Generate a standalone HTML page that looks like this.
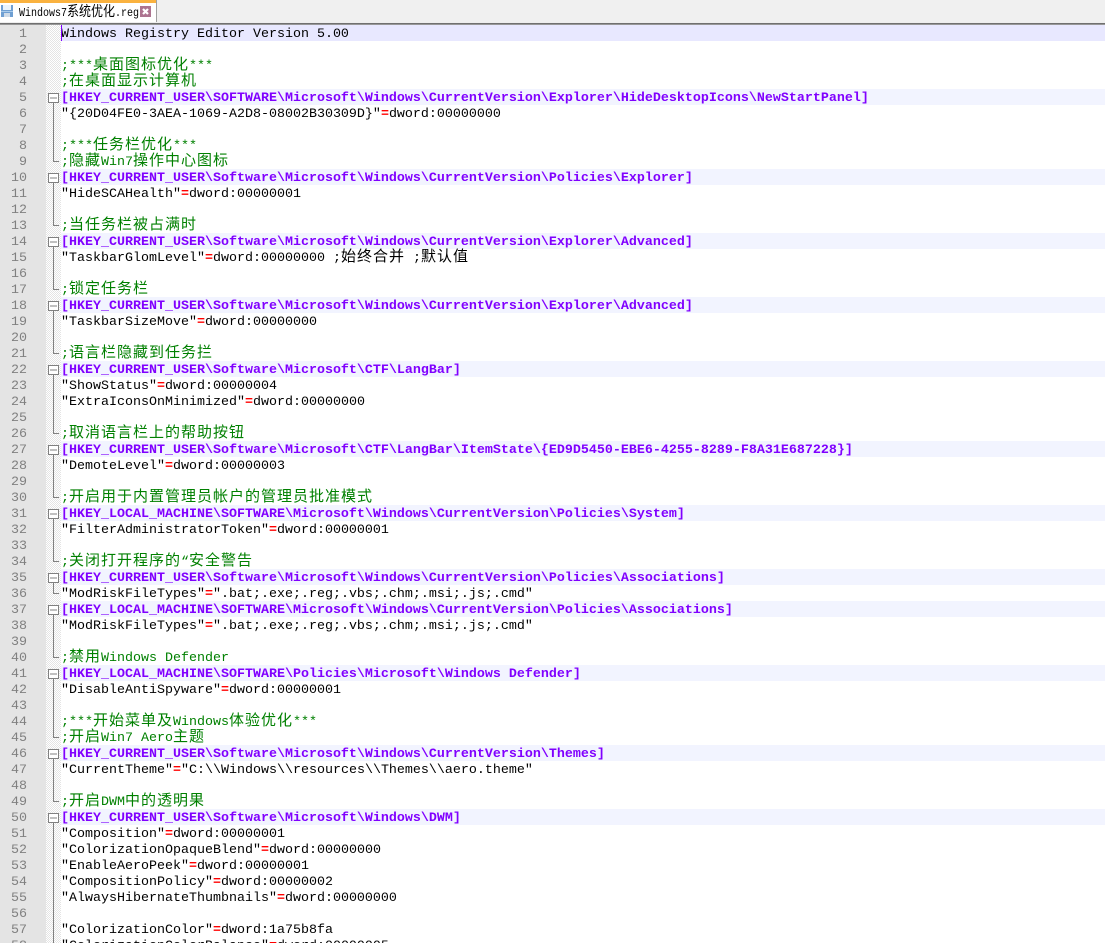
<!DOCTYPE html>
<html><head><meta charset="utf-8"><title>Windows7系统优化.reg</title>
<style>
html,body{margin:0;padding:0;background:#fff;width:1105px;height:944px;overflow:hidden}
#tabbar{position:absolute;left:0;top:0;width:1105px;height:22px;background:#f0f0f0}
#tab{position:absolute;left:0;top:0;width:156px;height:22px;background:#fff;border-right:1px solid #a0a0a0;box-sizing:content-box}
#tabtop{position:absolute;left:0;top:0;width:156px;height:3px;background:#fab23f}
#tabtext{position:absolute;left:19px;top:5px;height:20px;font:10px/20px "Liberation Mono",monospace;color:#000;white-space:pre;transform:scaleY(1.2);transform-origin:0 50%}
#tabtext span{font-family:"Noto Sans CJK SC",sans-serif;font-size:12px;line-height:0}
#rule{position:absolute;left:0;top:22px;width:1105px;height:3px;background:linear-gradient(#eeeeee 0 1px,#707070 1px 2px,#989898 2px 3px)}
#num{position:absolute;left:0;top:25px;width:46px;height:918px;background:#e4e4e4}
#fold{position:absolute;left:46px;top:25px;width:15px;height:918px;background:repeating-conic-gradient(#e4e4e4 0 25%,#fff 0 50%) 0 0/2px 2px}
#nums,#ed{position:absolute;top:25px;height:918px;overflow:hidden;font:13.333px/20px "Liberation Mono",monospace}
#nums{left:0;width:27px;text-align:right;color:#808080}
#ed{left:61px;width:1044px;color:#000}
#ed div,#nums div{height:16px;line-height:20px;white-space:pre}
.k{background:#f2f4ff;color:#8000ff;font-weight:bold}
.a{background:#e8e8ff}
.g{color:#008000}
.r{color:#f00;font-weight:bold}
i{font-family:"Noto Sans CJK SC",sans-serif;font-style:normal;font-size:15px;letter-spacing:1px;line-height:0}
#caret{position:absolute;left:61px;top:25px;width:1px;height:16px;background:#8000ff}
svg{position:absolute;left:46px;top:25px}
</style></head><body>
<div id="tabbar"><div id="tab"></div><div id="tabtop"></div>
<svg style="left:1px;top:5px" width="12" height="12" viewBox="0 0 12 12"><rect width="12" height="12" fill="#6f9fd2"/><rect x="2" y="0" width="8" height="5" fill="#eaf3fb"/><rect x="3" y="8" width="6" height="4" fill="#cfdbe8"/><rect x="0" y="6" width="12" height="1" fill="#a9cbeb"/></svg>
<div id="tabtext">Windows7<span>系统优化</span>.reg</div>
<svg style="left:140px;top:6px" width="11" height="11" viewBox="0 0 11 11"><rect width="11" height="11" fill="#ad7490"/><path d="M3 3L8 8M8 3L3 8" stroke="#fff" stroke-width="2.2"/></svg>
</div>
<div id="rule"></div>
<div id="num"></div><div id="fold"></div>
<div id="nums"><div>1</div><div>2</div><div>3</div><div>4</div><div>5</div><div>6</div><div>7</div><div>8</div><div>9</div><div>10</div><div>11</div><div>12</div><div>13</div><div>14</div><div>15</div><div>16</div><div>17</div><div>18</div><div>19</div><div>20</div><div>21</div><div>22</div><div>23</div><div>24</div><div>25</div><div>26</div><div>27</div><div>28</div><div>29</div><div>30</div><div>31</div><div>32</div><div>33</div><div>34</div><div>35</div><div>36</div><div>37</div><div>38</div><div>39</div><div>40</div><div>41</div><div>42</div><div>43</div><div>44</div><div>45</div><div>46</div><div>47</div><div>48</div><div>49</div><div>50</div><div>51</div><div>52</div><div>53</div><div>54</div><div>55</div><div>56</div><div>57</div><div>58</div></div>
<svg width="15" height="918" viewBox="0 0 15 918" fill="none" stroke="#808080" stroke-width="1" shape-rendering="crispEdges">
<path d="M7.5 77V136.5H13M7.5 156V200.5H13M7.5 220V264.5H13M7.5 284V328.5H13M7.5 348V408.5H13M7.5 428V472.5H13M7.5 492V536.5H13M7.5 556V568.5H13M7.5 588V632.5H13M7.5 652V712.5H13M7.5 732V776.5H13M7.5 796V918"/>
<g fill="#fff">
<rect x="2.5" y="68.5" width="10" height="9"/><rect x="2.5" y="148.5" width="10" height="9"/><rect x="2.5" y="212.5" width="10" height="9"/><rect x="2.5" y="276.5" width="10" height="9"/><rect x="2.5" y="340.5" width="10" height="9"/><rect x="2.5" y="420.5" width="10" height="9"/><rect x="2.5" y="484.5" width="10" height="9"/><rect x="2.5" y="548.5" width="10" height="9"/><rect x="2.5" y="580.5" width="10" height="9"/><rect x="2.5" y="644.5" width="10" height="9"/><rect x="2.5" y="724.5" width="10" height="9"/><rect x="2.5" y="788.5" width="10" height="9"/>
</g>
<path d="M4 73H11M4 153H11M4 217H11M4 281H11M4 345H11M4 425H11M4 489H11M4 553H11M4 585H11M4 649H11M4 729H11M4 793H11"/>
</svg>
<div id="ed"><div class="a">Windows Registry Editor Version 5.00</div><div></div><div class="g">;***<i>桌面图标优化</i>***</div><div class="g">;<i>在桌面显示计算机</i></div><div class="k">[HKEY_CURRENT_USER\SOFTWARE\Microsoft\Windows\CurrentVersion\Explorer\HideDesktopIcons\NewStartPanel]</div><div>"{20D04FE0-3AEA-1069-A2D8-08002B30309D}"<span class="r">=</span>dword:00000000</div><div></div><div class="g">;***<i>任务栏优化</i>***</div><div class="g">;<i>隐藏</i>Win7<i>操作中心图标</i></div><div class="k">[HKEY_CURRENT_USER\Software\Microsoft\Windows\CurrentVersion\Policies\Explorer]</div><div>"HideSCAHealth"<span class="r">=</span>dword:00000001</div><div></div><div class="g">;<i>当任务栏被占满时</i></div><div class="k">[HKEY_CURRENT_USER\Software\Microsoft\Windows\CurrentVersion\Explorer\Advanced]</div><div>"TaskbarGlomLevel"<span class="r">=</span>dword:00000000 ;<i>始终合并</i> ;<i>默认值</i></div><div></div><div class="g">;<i>锁定任务栏</i></div><div class="k">[HKEY_CURRENT_USER\Software\Microsoft\Windows\CurrentVersion\Explorer\Advanced]</div><div>"TaskbarSizeMove"<span class="r">=</span>dword:00000000</div><div></div><div class="g">;<i>语言栏隐藏到任务拦</i></div><div class="k">[HKEY_CURRENT_USER\Software\Microsoft\CTF\LangBar]</div><div>"ShowStatus"<span class="r">=</span>dword:00000004</div><div>"ExtraIconsOnMinimized"<span class="r">=</span>dword:00000000</div><div></div><div class="g">;<i>取消语言栏上的帮助按钮</i></div><div class="k">[HKEY_CURRENT_USER\Software\Microsoft\CTF\LangBar\ItemState\{ED9D5450-EBE6-4255-8289-F8A31E687228}]</div><div>"DemoteLevel"<span class="r">=</span>dword:00000003</div><div></div><div class="g">;<i>开启用于内置管理员帐户的管理员批准模式</i></div><div class="k">[HKEY_LOCAL_MACHINE\SOFTWARE\Microsoft\Windows\CurrentVersion\Policies\System]</div><div>"FilterAdministratorToken"<span class="r">=</span>dword:00000001</div><div></div><div class="g">;<i>关闭打开程序的</i>“<i>安全警告</i></div><div class="k">[HKEY_CURRENT_USER\Software\Microsoft\Windows\CurrentVersion\Policies\Associations]</div><div>"ModRiskFileTypes"<span class="r">=</span>".bat;.exe;.reg;.vbs;.chm;.msi;.js;.cmd"</div><div class="k">[HKEY_LOCAL_MACHINE\SOFTWARE\Microsoft\Windows\CurrentVersion\Policies\Associations]</div><div>"ModRiskFileTypes"<span class="r">=</span>".bat;.exe;.reg;.vbs;.chm;.msi;.js;.cmd"</div><div></div><div class="g">;<i>禁用</i>Windows Defender</div><div class="k">[HKEY_LOCAL_MACHINE\SOFTWARE\Policies\Microsoft\Windows Defender]</div><div>"DisableAntiSpyware"<span class="r">=</span>dword:00000001</div><div></div><div class="g">;***<i>开始菜单及</i>Windows<i>体验优化</i>***</div><div class="g">;<i>开启</i>Win7 Aero<i>主题</i></div><div class="k">[HKEY_CURRENT_USER\Software\Microsoft\Windows\CurrentVersion\Themes]</div><div>"CurrentTheme"<span class="r">=</span>"C:\\Windows\\resources\\Themes\\aero.theme"</div><div></div><div class="g">;<i>开启</i>DWM<i>中的透明果</i></div><div class="k">[HKEY_CURRENT_USER\Software\Microsoft\Windows\DWM]</div><div>"Composition"<span class="r">=</span>dword:00000001</div><div>"ColorizationOpaqueBlend"<span class="r">=</span>dword:00000000</div><div>"EnableAeroPeek"<span class="r">=</span>dword:00000001</div><div>"CompositionPolicy"<span class="r">=</span>dword:00000002</div><div>"AlwaysHibernateThumbnails"<span class="r">=</span>dword:00000000</div><div></div><div>"ColorizationColor"<span class="r">=</span>dword:1a75b8fa</div><div>"ColorizationColorBalance"<span class="r">=</span>dword:00000005</div></div>
<div id="caret"></div>
</body></html>
